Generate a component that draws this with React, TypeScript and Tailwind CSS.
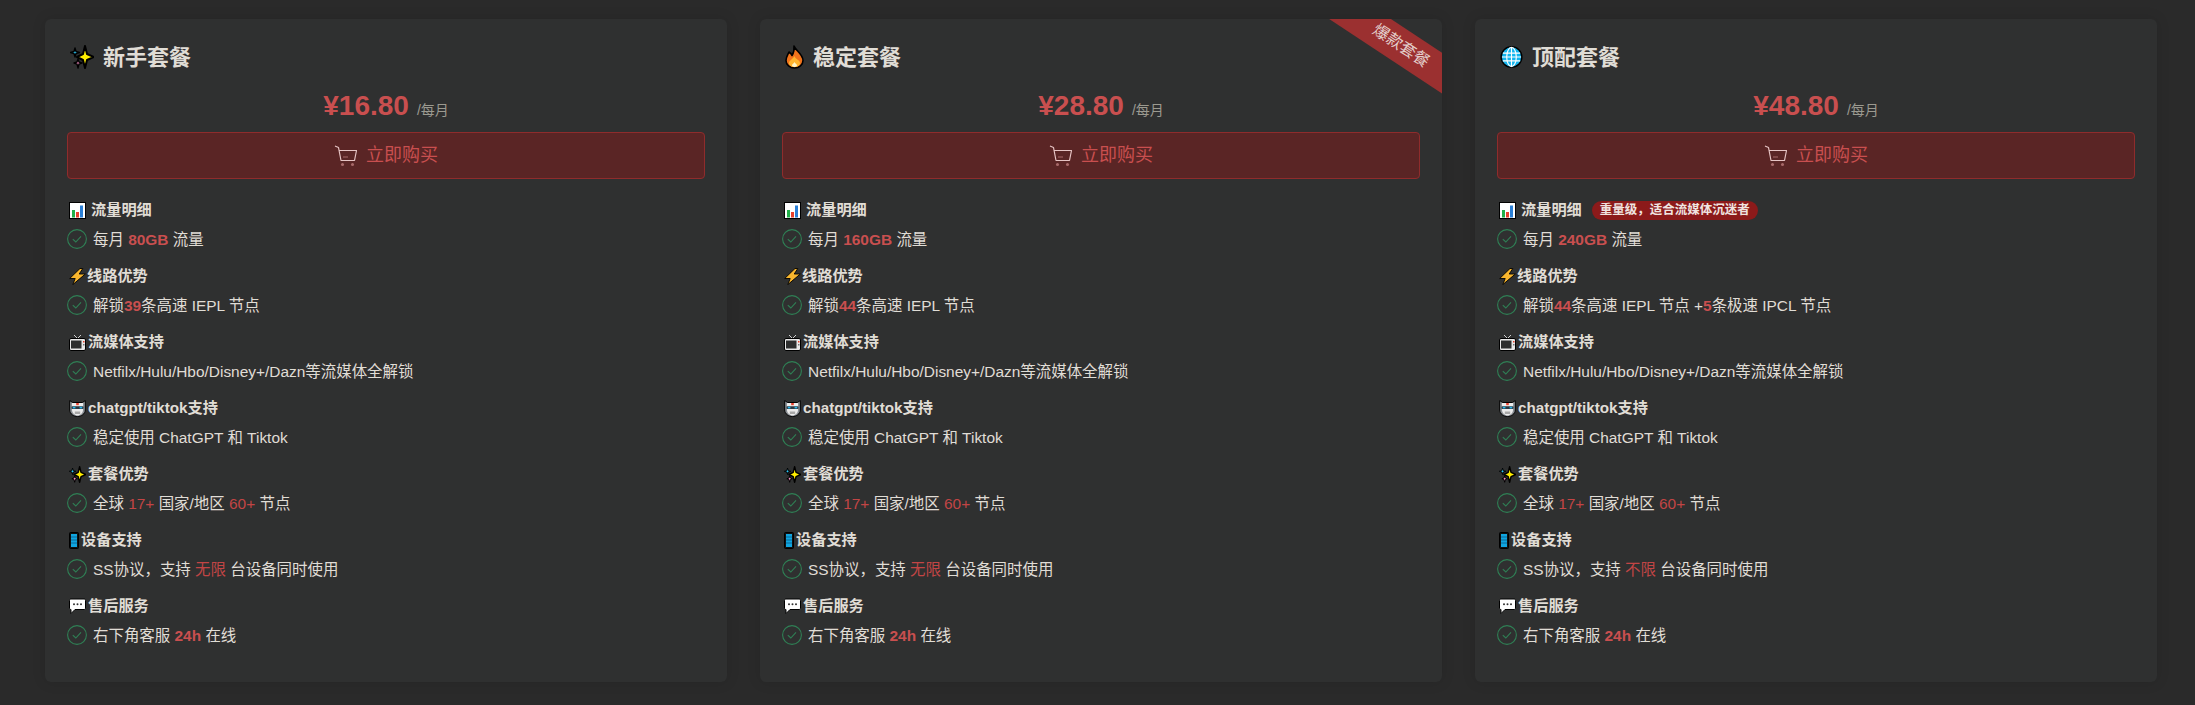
import React from "react";

const FONT = "[font-family:'Liberation_Sans','Noto_Sans_CJK_SC',sans-serif]";

function Sparkles({ s = 17 }: { s?: number }) {
  return (
    <svg width={s} height={s} viewBox="0 0 24 24" className="shrink-0">
      <path d="M15 1 L17 9 L24 12 L17 15 L15 23 L13 15 L7 12 L13 9 Z" fill="#ffee00" stroke="#000" strokeWidth="2" strokeLinejoin="round" />
      <path d="M5 3 L6 6.5 L9.5 7.5 L6 8.5 L5 12 L4 8.5 L0.5 7.5 L4 6.5 Z" fill="#2cc3f2" stroke="#000" strokeWidth="1.4" strokeLinejoin="round" />
      <path d="M8 14 L9 17 L12 18 L9 19 L8 23 L7 19 L4 18 L7 17 Z" fill="#f48cc0" stroke="#000" strokeWidth="1.4" strokeLinejoin="round" />
    </svg>
  );
}
function Fire() {
  return (
    <svg width={19} height={24} viewBox="0 0 19 24" className="shrink-0">
      <path d="M9 1 C10 5 18 9 18 15.5 C18 20 14 23 9.5 23 C5 23 1 20 1 15.5 C1 12 3 9.5 4 7 C5.5 8 6.5 9 7 10.5 C8.5 8 9.5 5 9 1 Z" fill="#f0731c" stroke="#000" strokeWidth="1.6" strokeLinejoin="round" />
      <path d="M9.5 11 C10 14 15 15 15 18 C15 20.5 12.5 22 9.5 22 C6.5 22 4 20.5 4 18 C4 15.5 8 14 9.5 11 Z" fill="#ffb52e" />
      <path d="M9.5 17 C10 18.5 12 19 12 20.3 C12 21.4 10.8 22 9.5 22 C8.2 22 7 21.4 7 20.3 C7 19 9 18.5 9.5 17 Z" fill="#fff6c8" />
    </svg>
  );
}
function Globe() {
  return (
    <svg width={23} height={24} viewBox="0 0 24 24" className="shrink-0">
      <circle cx="12" cy="12" r="10.8" fill="#12b5ee" stroke="#000" strokeWidth="1.5" />
      <g stroke="#fff" strokeWidth="1.2" fill="none">
        <ellipse cx="12" cy="12" rx="5" ry="10" />
        <path d="M12 2v20M3 8h18M2 12h20M3 16h18" />
      </g>
    </svg>
  );
}
function Chart() {
  return (
    <svg width={17} height={17} viewBox="0 0 17 17" className="shrink-0">
      <rect x="0.5" y="0.5" width="16" height="16" fill="#fff" stroke="#000" />
      <rect x="3" y="8" width="3" height="7.5" fill="#22b04a" />
      <rect x="7" y="10" width="3" height="5.5" fill="#e8402c" />
      <rect x="11" y="3.5" width="3" height="12" fill="#2a7fd6" />
    </svg>
  );
}
function Bolt() {
  return (
    <svg width={17} height={17} viewBox="0 0 17 17" className="shrink-0">
      <path d="M11 0.5 L0.7 10.5 L6.2 10.5 L3.8 16.6 L16.3 6 L10.2 6 L13.8 0.5 Z" fill="#f8b62e" stroke="#000" strokeWidth="0.9" strokeLinejoin="round" />
    </svg>
  );
}
function Tv() {
  return (
    <svg width={17} height={17} viewBox="0 0 17 17" className="shrink-0">
      <path d="M5 1 L8.5 4.5 L12 1" fill="none" stroke="#cfcfcf" strokeWidth="1" />
      <rect x="0.5" y="4.5" width="16" height="12" rx="1.5" fill="#e8e8e8" stroke="#000" />
      <rect x="2" y="6.5" width="10.5" height="8" fill="#2d2e2e" />
      <rect x="14" y="7" width="1.5" height="1.5" fill="#e8402c" />
      <rect x="14" y="10" width="1.5" height="1.5" fill="#777" />
    </svg>
  );
}
function Robot() {
  return (
    <svg width={17} height={17} viewBox="0 0 17 17" className="shrink-0">
      <path d="M0.7 0.5 L3.5 2.5 H13.5 L16.3 0.5 V10 C16.3 14 12 16.6 8.5 16.6 C5 16.6 0.7 14 0.7 10 Z" fill="#8a8f94" stroke="#000" />
      <path d="M3 3 H14 V10 C14 13 11 15.5 8.5 15.5 C6 15.5 3 13 3 10 Z" fill="#ececec" />
      <rect x="7.2" y="3" width="2.6" height="2.2" fill="#e8402c" />
      <rect x="2.5" y="6.2" width="12" height="2.8" rx="0.8" fill="#2b3742" />
      <rect x="3.8" y="6.8" width="2.6" height="1.6" fill="#25b7ee" />
      <rect x="10.6" y="6.8" width="2.6" height="1.6" fill="#25b7ee" />
      <rect x="5.8" y="11.5" width="5.4" height="2.5" fill="#a8a8a8" />
    </svg>
  );
}
function Phone() {
  return (
    <svg width={10} height={17} viewBox="0 0 10 17" className="shrink-0">
      <rect x="0.5" y="0.5" width="9" height="16" rx="1" fill="#111" stroke="#000" />
      <rect x="2" y="2" width="6" height="13" fill="#10a5e0" />
      <path d="M2 5h6M2 8h6M2 11h6" stroke="#0a5c86" strokeWidth="0.8" />
    </svg>
  );
}
function Speech() {
  return (
    <svg width={17} height={17} viewBox="0 0 17 17" className="shrink-0">
      <path d="M2 1 H15 C16 1 16.5 1.5 16.5 2.5 V10 C16.5 11 16 11.5 15 11.5 H6 L2 15.5 V11.5 H2 C1 11.5 0.5 11 0.5 10 V2.5 C0.5 1.5 1 1 2 1 Z" fill="#fff" stroke="#000" />
      <circle cx="5" cy="6.2" r="1" fill="#333" />
      <circle cx="8.5" cy="6.2" r="1" fill="#333" />
      <circle cx="12" cy="6.2" r="1" fill="#333" />
    </svg>
  );
}
function Check() {
  return (
    <svg width={20} height={20} viewBox="0 0 20 20" fill="none" className="shrink-0 -translate-y-[1px]">
      <circle cx="10" cy="10" r="9.4" stroke="#2f8055" strokeWidth="1.1" />
      <path d="M5.8 10.2 L8.8 13 L14 7.4" stroke="#2f8055" strokeWidth="1.1" />
    </svg>
  );
}
function Cart() {
  return (
    <svg width={24} height={22} viewBox="0 0 24 22" fill="none" className="shrink-0">
      <path d="M1 1 L4.5 2.5 L7 15.5 H20.5 L22.5 5.5 H5.2" stroke="#e6c4c4" strokeWidth="1.2" strokeLinejoin="round" />
      <path d="M9 12 H14" stroke="#a86a6a" strokeWidth="1.2" />
      <circle cx="8.5" cy="19.5" r="1.5" fill="#a86a6a" />
      <circle cx="18.5" cy="19.5" r="1.5" fill="#a86a6a" />
    </svg>
  );
}

const R = ({ children, b = true }: { children: React.ReactNode; b?: boolean }) => (
  <span className={b ? "font-bold text-[#c94f4f]" : "text-[#c24545]"}>{children}</span>
);

function Section({ icon, title, gap, pill, children }: { icon: React.ReactNode; title: string; gap: string; pill?: string; children: React.ReactNode }) {
  return (
    <div className="flex flex-col gap-[10px]">
      <div className="flex h-5 items-center pl-[2px] text-[15.2px] font-bold text-[#e0ddd6]">
        {icon}
        <span className={gap}>{title}</span>
        {pill && (
          <span className="ml-[10px] flex h-[19px] items-center rounded-full bg-[#8c1a1a] px-[8px] text-[12.5px] text-[#f0e4e0]">{pill}</span>
        )}
      </div>
      <div className="flex h-5 items-center gap-[6px] text-[15.45px] text-[#e0ddd6]">
        <Check />
        <span>{children}</span>
      </div>
    </div>
  );
}

type Plan = {
  icon: React.ReactNode;
  name: string;
  price: string;
  gb: string;
  pill?: string;
  lines: React.ReactNode;
  limit: string;
  hot?: boolean;
};

const plans: Plan[] = [
  { icon: <Sparkles s={24} />, name: "新手套餐", price: "¥16.80", gb: "80GB", lines: <>解锁<R>39</R>条高速 IEPL 节点</>, limit: "无限" },
  { icon: <Fire />, name: "稳定套餐", price: "¥28.80", gb: "160GB", lines: <>解锁<R>44</R>条高速 IEPL 节点</>, limit: "无限", hot: true },
  { icon: <Globe />, name: "顶配套餐", price: "¥48.80", gb: "240GB", pill: "重量级，适合流媒体沉迷者", lines: <>解锁<R>44</R>条高速 IEPL 节点 +<R>5</R>条极速 IPCL 节点</>, limit: "不限" },
];

function Card({ p }: { p: Plan }) {
  return (
    <div className="relative overflow-hidden rounded-[6px] bg-[#2f3030] px-[22px] pt-[23px] pb-[36px] shadow-[0_0_14px_rgba(0,0,0,0.12)]">
      {p.hot && (
        <div className="absolute left-[541px] top-[10px] flex h-[34px] w-[200px] rotate-[33.4deg] items-center justify-center bg-[#9b3030] text-[16px] text-[#e4cfcc]">
          爆款套餐
        </div>
      )}
      <div className="flex h-[30px] items-center gap-[9px] pl-[3px] text-[22px] font-bold text-[#e0ddd6]">
        {p.icon}
        <span>{p.name}</span>
      </div>
      <div className="mt-[13px] flex h-[32px] items-baseline justify-center gap-[8px]">
        <span className="text-[28px] font-bold text-[#c94f4f]">{p.price}</span>
        <span className="text-[14px] text-[#9c9a90]">/每月</span>
      </div>
      <div className="mt-[15px] flex h-[47px] items-center justify-center gap-[8px] rounded-[4px] border border-[#8f2c2c] bg-[#5a2525] text-[18px] text-[#c94f4f]">
        <Cart />
        <span>立即购买</span>
      </div>
      <div className="mt-[21px] flex flex-col gap-4">
        <Section icon={<Chart />} title="流量明细" gap="ml-[5px]" pill={p.pill}>
          每月 <R>{p.gb}</R> 流量
        </Section>
        <Section icon={<Bolt />} title="线路优势" gap="ml-[1px]">{p.lines}</Section>
        <Section icon={<Tv />} title="流媒体支持" gap="ml-[2px]">Netfilx/Hulu/Hbo/Disney+/Dazn等流媒体全解锁</Section>
        <Section icon={<Robot />} title="chatgpt/tiktok支持" gap="ml-[2px]">稳定使用 ChatGPT 和 Tiktok</Section>
        <Section icon={<Sparkles />} title="套餐优势" gap="ml-[2px]">
          全球 <R b={false}>17+</R> 国家/地区 <R b={false}>60+</R> 节点
        </Section>
        <Section icon={<Phone />} title="设备支持" gap="ml-[2px]">
          SS协议，支持 <R b={false}>{p.limit}</R> 台设备同时使用
        </Section>
        <Section icon={<Speech />} title="售后服务" gap="ml-[2px]">
          右下角客服 <R>24h</R> 在线
        </Section>
      </div>
    </div>
  );
}

export default function App() {
  return (
    <div className={`h-[705px] overflow-hidden bg-[#2a2a2a] pt-[19px] pl-[45px] ${FONT}`}>
      <div className="grid w-[2112px] grid-cols-3 gap-[33px]">
        {plans.map((p) => (
          <Card key={p.name} p={p} />
        ))}
      </div>
    </div>
  );
}
